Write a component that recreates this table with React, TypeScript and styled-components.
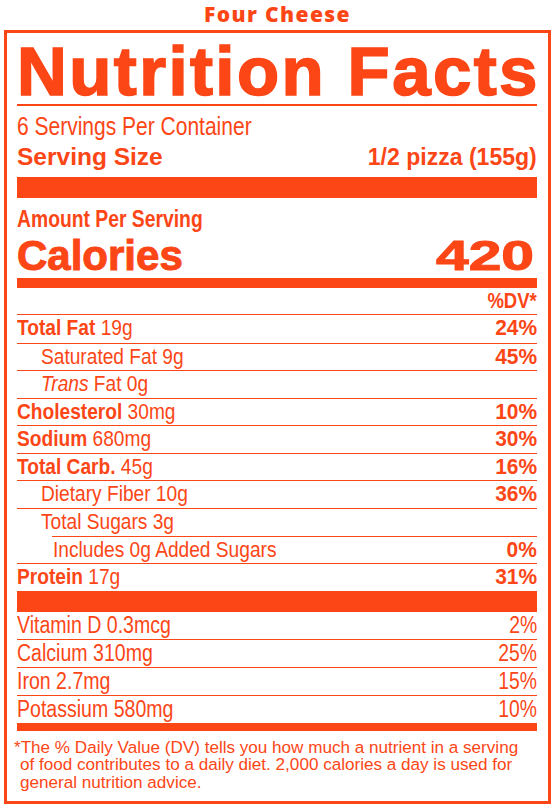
import styled, { createGlobalStyle } from "styled-components";

const ORANGE = "#fc4616";

const GlobalStyle = createGlobalStyle`
	html, body {
		margin: 0;
		padding: 0;
		background: #ffffff;
	}
	body {
		font-family: "Liberation Sans", Arial, sans-serif;
		color: ${ORANGE};
	}
`;

const Page = styled.div`
	width: 553px;
	height: 809px;
	box-sizing: border-box;
	padding: 0 2px 5px 4px;
	display: flex;
	flex-direction: column;
`;

const Product = styled.h2`
	margin: 0;
	padding-bottom: 1px;
	line-height: 29px;
	text-align: center;
	font-family: "Open Sans", "Liberation Sans", sans-serif;
	font-weight: 800;
	font-size: 21px;
	letter-spacing: 1.4px;
`;

const Label = styled.section`
	flex: 1;
	display: flex;
	flex-direction: column;
	border: 3px solid ${ORANGE};
	padding: 0 11px 0 10px;
`;

const Heading = styled.h1`
	margin: 0;
	padding-top: 7px;
	line-height: 64px;
	font-size: 69px;
	font-weight: 700;
	letter-spacing: 2.4px;
	-webkit-text-stroke: 1.6px ${ORANGE};
	white-space: nowrap;
	border-bottom: 2px solid ${ORANGE};
`;

const Narrow = styled.span<{ $scale: number; $right?: boolean }>`
	display: inline-block;
	white-space: nowrap;
	transform: scaleX(${(p) => p.$scale});
	transform-origin: ${(p) => (p.$right ? "right" : "left")} center;
`;

const Servings = styled.div`
	margin-top: 5px;
	line-height: 30px;
	font-size: 25px;
`;

const Split = styled.div`
	display: flex;
	justify-content: space-between;
	align-items: baseline;
	white-space: nowrap;
`;

const ServingSize = styled(Split)`
	margin-top: 1px;
	line-height: 29px;
	font-size: 24.5px;
	font-weight: 700;
`;

const Bar = styled.div<{ $h: number; $mt?: number }>`
	height: ${(p) => p.$h}px;
	margin-top: ${(p) => p.$mt ?? 0}px;
	background: ${ORANGE};
	flex-shrink: 0;
`;

const Amount = styled.div`
	margin-top: 8px;
	line-height: 26px;
	font-size: 23px;
	font-weight: 700;
`;

const Calories = styled(Split)`
	margin-top: 3px;
	line-height: 41px;
	font-size: 42px;
	font-weight: 700;
	-webkit-text-stroke: 1px ${ORANGE};
`;

const Energy = styled(Narrow)`
	margin-right: 3px;
`;

const DvHead = styled.div`
	box-sizing: border-box;
	height: 27px;
	line-height: 26px;
	text-align: right;
	font-size: 22px;
	font-weight: 700;
	border-bottom: 1px solid ${ORANGE};
`;

const Row = styled.div<{ $pad?: number; $inset?: number }>`
	box-sizing: border-box;
	height: 27.57px;
	line-height: 26.6px;
	display: flex;
	justify-content: space-between;
	align-items: baseline;
	margin-left: ${(p) => p.$inset ?? 0}px;
	padding-left: ${(p) => p.$pad ?? 0}px;
	font-size: 22px;

	& + & {
		border-top: 1px solid ${ORANGE};
	}

	b {
		font-weight: 700;
	}
	i {
		font-style: italic;
	}
`;

const Pct = styled.span`
	font-weight: 700;
`;

const Mineral = styled(Row)`
	height: 27.75px;
	line-height: 26.8px;
	font-size: 23px;
`;

const Footnote = styled.p`
	margin: 8px 0 0;
	padding-left: 3px;
	text-indent: -6px;
	font-size: 17.1px;
	line-height: 17.8px;
	white-space: nowrap;
`;

type Nutrient = {
	name: string;
	amount: string;
	dv?: string;
	bold?: boolean;
	italic?: string;
	pad?: number;
	inset?: number;
};

const nutrients: Nutrient[] = [
	{ name: "Total Fat", amount: "19g", dv: "24%", bold: true },
	{ name: "Saturated Fat", amount: "9g", dv: "45%", pad: 24 },
	{ name: "Fat", italic: "Trans", amount: " 0g", pad: 24 },
	{ name: "Cholesterol", amount: "30mg", dv: "10%", bold: true },
	{ name: "Sodium", amount: "680mg", dv: "30%", bold: true },
	{ name: "Total Carb.", amount: "45g", dv: "16%", bold: true },
	{ name: "Dietary Fiber", amount: "10g", dv: "36%", pad: 24 },
	{ name: "Total Sugars", amount: "3g", pad: 24 },
	{ name: "Includes 0g Added Sugars", amount: "", dv: "0%", inset: 35, pad: 1 },
	{ name: "Protein", amount: "17g", dv: "31%", bold: true },
];

const minerals = [
	{ name: "Vitamin D 0.3mcg", dv: "2%" },
	{ name: "Calcium 310mg", dv: "25%" },
	{ name: "Iron 2.7mg", dv: "15%" },
	{ name: "Potassium 580mg", dv: "10%" },
];

export default function App() {
	return (
		<>
			<GlobalStyle />
			<Page>
				<Product>Four Cheese</Product>
				<Label>
					<Heading>Nutrition Facts</Heading>
					<Servings>
						<Narrow $scale={0.84}>6 Servings Per Container</Narrow>
					</Servings>
					<ServingSize>
						<span>Serving Size</span>
						<Narrow $scale={0.94} $right>
							1/2 pizza (155g)
						</Narrow>
					</ServingSize>
					<Bar $h={21} $mt={6} />
					<Amount>
						<Narrow $scale={0.84}>Amount Per Serving</Narrow>
					</Amount>
					<Calories>
						<span>Calories</span>
						<Energy $scale={1.4} $right>
							420
						</Energy>
					</Calories>
					<Bar $h={10} $mt={2} />
					<DvHead>
						<Narrow $scale={0.84} $right>
							%DV*
						</Narrow>
					</DvHead>
					{nutrients.map((n, i) => (
						<Row key={i} $pad={n.pad} $inset={n.inset}>
							<Narrow $scale={0.87}>
								{n.bold ? <b>{n.name}</b> : null}
								{n.italic ? (
									<>
										<i>{n.italic}</i> {n.name}
									</>
								) : null}
								{!n.bold && !n.italic ? n.name : null}
								{n.amount ? (n.italic ? n.amount : " " + n.amount) : null}
							</Narrow>
							{n.dv ? (
								<Narrow $scale={0.95} $right>
									<Pct>{n.dv}</Pct>
								</Narrow>
							) : null}
						</Row>
					))}
					<Bar $h={21} />
					{minerals.map((m, i) => (
						<Mineral key={i}>
							<Narrow $scale={0.85}>{m.name}</Narrow>
							<Narrow $scale={0.84} $right>
								{m.dv}
							</Narrow>
						</Mineral>
					))}
					<Bar $h={8} />
					<Footnote>
						*The % Daily Value (DV) tells you how much a nutrient in a serving
						<br />
						of food contributes to a daily diet. 2,000 calories a day is used for
						<br />
						general nutrition advice.
					</Footnote>
				</Label>
			</Page>
		</>
	);
}
